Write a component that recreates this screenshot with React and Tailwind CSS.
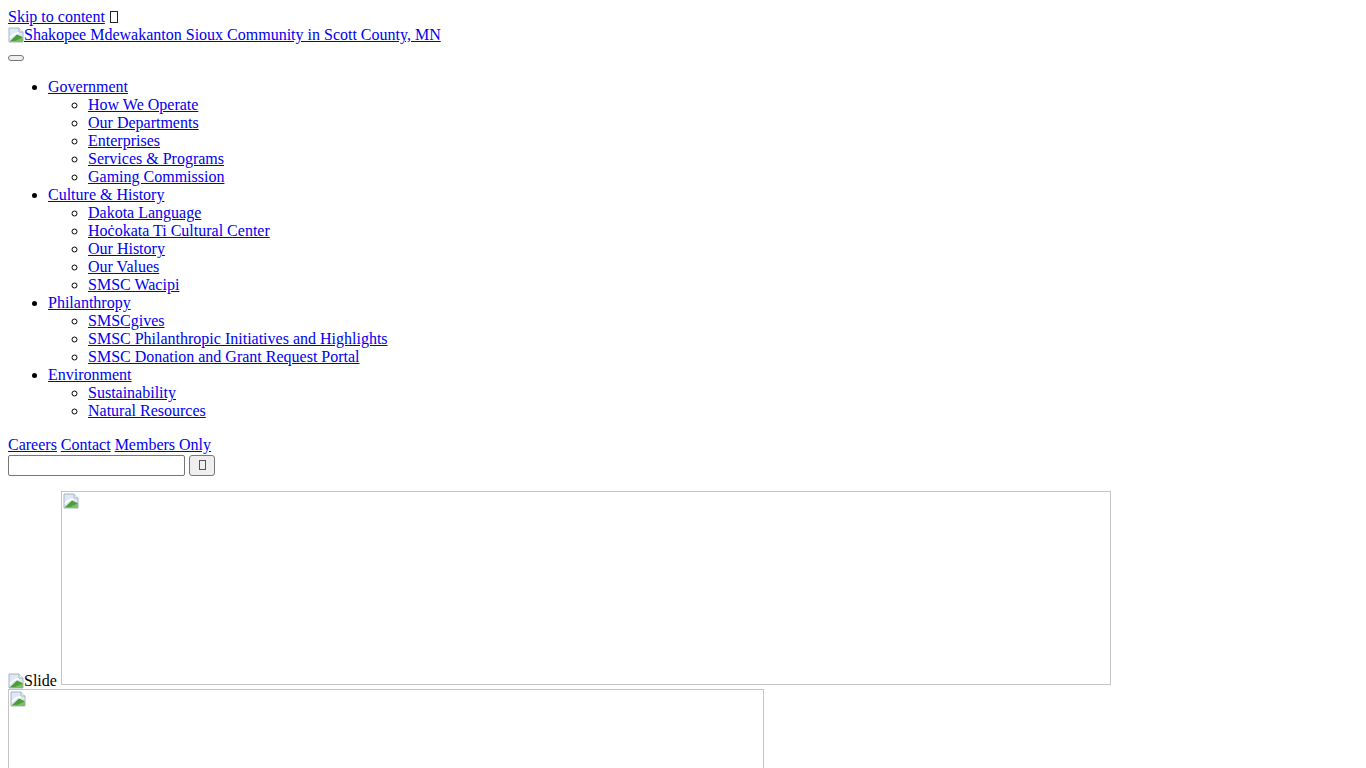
import React from 'react';

const menu = [
  { label: 'Government', items: ['How We Operate', 'Our Departments', 'Enterprises', 'Services & Programs', 'Gaming Commission'] },
  { label: 'Culture & History', items: ['Dakota Language', 'Hoċokata Ti Cultural Center', 'Our History', 'Our Values', 'SMSC Wacipi'] },
  { label: 'Philanthropy', items: ['SMSCgives', 'SMSC Philanthropic Initiatives and Highlights', 'SMSC Donation and Grant Request Portal'] },
  { label: 'Environment', items: ['Sustainability', 'Natural Resources'] },
];

// broken-image placeholder
const BrokenIcon = () => (
  <svg width="16" height="16" viewBox="0 0 16 16" className="shrink-0 w-[16px] h-[16px]">
    <path d="M1 1h10l4 4v10H1z" fill="#dfe9f5" stroke="#a7b4c2" strokeWidth="1" />
    <path d="M11 1v4h4" fill="#f2f5f8" stroke="#a7b4c2" strokeWidth="1" />
    <path d="M1.5 14.5L9 7.5l5.5 2.5v4.5z" fill="#4c9e3a" />
    <path d="M6 14.5l8.5-4v4z" fill="#7bc05c" />
    <path d="M2 11c2-3 5-5 9-5" fill="none" stroke="#ffffff" strokeWidth="1.5" />
  </svg>
);

const Tofu = () => (
  <span className="inline-block w-[8px] h-[12px] ml-[1px] border border-[#222] align-[-1px]" />
);

const Link = ({ children, className = '' }) => (
  <a href="#" className={`text-[#0000ee] underline ${className}`}>{children}</a>
);

export default function App() {
  return (
    <div className="p-2 bg-white text-black text-[16px] leading-[18px] font-['Liberation_Serif','Times_New_Roman',serif] h-[768px] overflow-hidden">
      <div className="h-[18px]">
        <Link>Skip to content</Link> <Tofu />
      </div>
      <div className="h-[18px] flex items-end">
        <a href="#" className="text-[#0000ee] underline flex items-end">
          <span className="pb-[1px]"><BrokenIcon /></span>
          <span>Shakopee Mdewakanton Sioux Community in Scott County, MN</span>
        </a>
      </div>
      <div className="h-[18px] pt-[11px]">
        <button className="block w-[16px] h-[6px] rounded-[3px] border border-[#767676] bg-[#efefef]" />
      </div>
      <ul className="list-disc pl-10 my-4">
        {menu.map((m) => (
          <li key={m.label}>
            <Link>{m.label}</Link>
            <ul className="list-[circle] pl-10">
              {m.items.map((s) => (
                <li key={s}><Link>{s}</Link></li>
              ))}
            </ul>
          </li>
        ))}
      </ul>
      <div className="h-[18px]">
        <Link>Careers</Link> <Link>Contact</Link> <Link>Members Only</Link>
      </div>
      <div className="flex items-center gap-1 h-[22px]">
        <input className="w-[177px] h-[21px] border border-[#767676] rounded-[2px] bg-white" />
        <button className="w-[26px] h-[21px] border border-[#767676] rounded-[3px] bg-[#efefef] flex items-center justify-center">
          <span className="inline-block w-[7px] h-[10px] border border-[#555]" />
        </button>
      </div>
      <div className="mt-[15px] flex items-start">
        <span className="flex items-end mt-[181px]">
          <BrokenIcon />
          <span className="leading-[17px]">Slide</span>
        </span>
        <div className="ml-[4px] w-[1050px] h-[194px] border border-[#c4c4c4] p-[1px]">
          <BrokenIcon />
        </div>
      </div>
      <div className="w-[756px] h-[200px] border border-[#c4c4c4] p-[1px]">
        <BrokenIcon />
      </div>
    </div>
  );
}
